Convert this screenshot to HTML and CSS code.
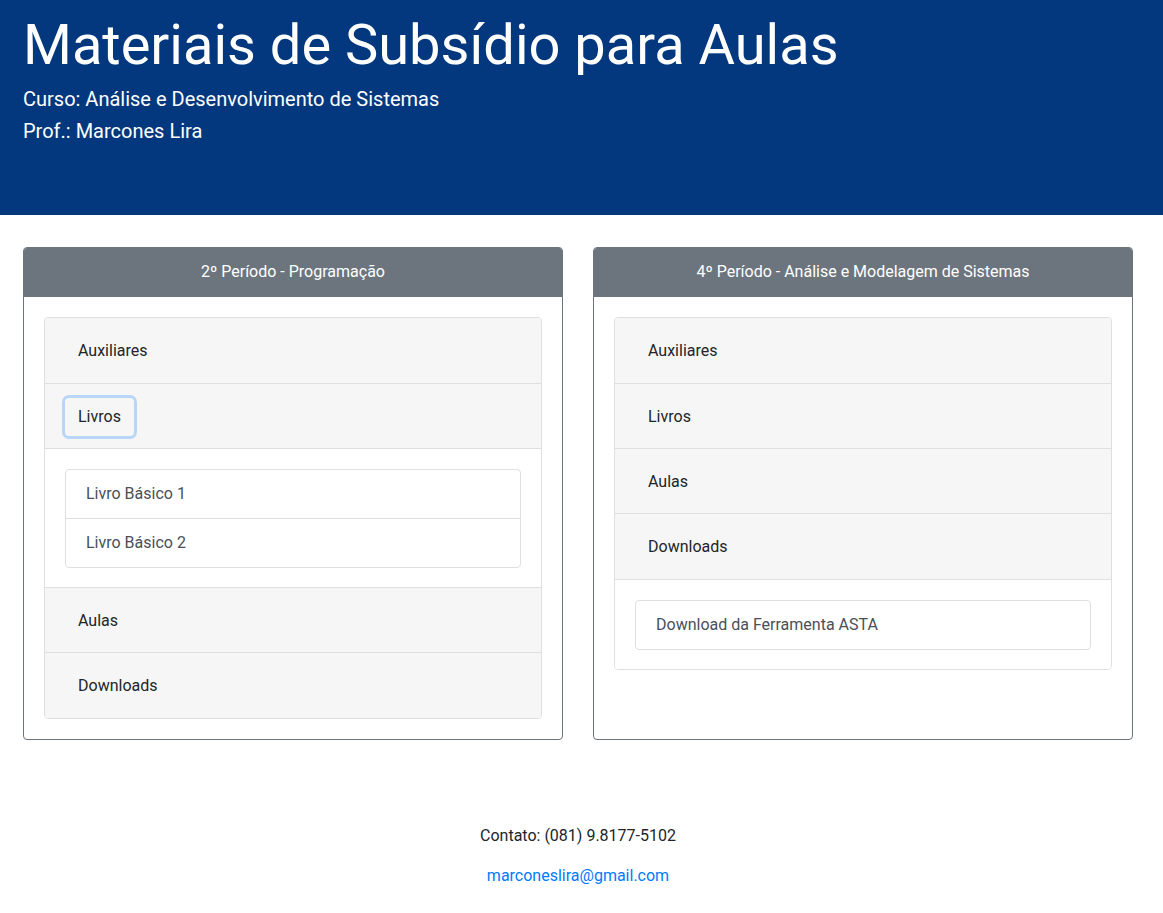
FILE: index.html
```html
<!DOCTYPE html>
<html lang="pt-br">
<head>
<meta charset="utf-8">
<title>Materiais de Subsídio para Aulas</title>
<link rel="stylesheet" href="styles.css">
</head>
<body>
<header class="hero">
  <h1 class="hero-title">Materiais de Subsídio para Aulas</h1>
  <p class="hero-line">Curso: Análise e Desenvolvimento de Sistemas</p>
  <p class="hero-line">Prof.: Marcones Lira</p>
</header>

<main class="content">
  <section class="card">
    <div class="card-head">2º Período - Programação</div>
    <div class="card-body">
      <div class="accordion">
        <div class="acc-item">
          <div class="acc-head"><button class="acc-btn">Auxiliares</button></div>
        </div>
        <div class="acc-item">
          <div class="acc-head"><button class="acc-btn focused">Livros</button></div>
          <div class="acc-body">
            <div class="list">
              <a class="list-item" href="#">Livro Básico 1</a>
              <a class="list-item" href="#">Livro Básico 2</a>
            </div>
          </div>
        </div>
        <div class="acc-item">
          <div class="acc-head"><button class="acc-btn">Aulas</button></div>
        </div>
        <div class="acc-item">
          <div class="acc-head"><button class="acc-btn">Downloads</button></div>
        </div>
      </div>
    </div>
  </section>

  <section class="card">
    <div class="card-head">4º Período - Análise e Modelagem de Sistemas</div>
    <div class="card-body">
      <div class="accordion">
        <div class="acc-item">
          <div class="acc-head"><button class="acc-btn">Auxiliares</button></div>
        </div>
        <div class="acc-item">
          <div class="acc-head"><button class="acc-btn">Livros</button></div>
        </div>
        <div class="acc-item">
          <div class="acc-head"><button class="acc-btn">Aulas</button></div>
        </div>
        <div class="acc-item">
          <div class="acc-head"><button class="acc-btn">Downloads</button></div>
          <div class="acc-body">
            <div class="list">
              <a class="list-item" href="#">Download da Ferramenta ASTA</a>
            </div>
          </div>
        </div>
      </div>
    </div>
  </section>
</main>

<footer class="footer">
  <p class="footer-line">Contato: (081) 9.8177-5102</p>
  <p class="footer-line"><a class="footer-link" href="#">marconeslira@gmail.com</a></p>
</footer>
</body>
</html>
```

FILE: styles.css
```css
* { box-sizing: border-box; }

body {
  margin: 0;
  font-family: Roboto, "Liberation Sans", sans-serif;
  font-size: 16px;
  line-height: 1.5;
  color: #212529;
  background: #fff;
}

.hero {
  background: #03387e;
  color: #fff;
  padding: 12px 23px 68px;
}

.hero-title {
  margin: 0 0 4px;
  font-size: 56px;
  font-weight: 400;
  line-height: 1.2;
}

.hero-line {
  margin: 0;
  font-size: 20px;
  line-height: 32px;
  font-weight: 400;
}

.content {
  display: grid;
  grid-template-columns: 540px 540px;
  column-gap: 30px;
  padding: 32px 23px 0;
}

.card {
  border: 1px solid #6c757d;
  border-radius: 4px;
  overflow: hidden;
  display: flex;
  flex-direction: column;
}

.card-head {
  background: #6c757d;
  color: #fff;
  text-align: center;
  padding: 12px 20px;
  height: 49px;
  line-height: 24px;
}

.card-body {
  padding: 20px;
}

.accordion {
  border: 1px solid #dfdfdf;
  border-radius: 4px;
  overflow: hidden;
}

.acc-item + .acc-item {
  border-top: 1px solid #dfdfdf;
}

.acc-head {
  background: #f6f6f6;
  height: 64.4px;
  padding: 14px 20px 0;
  display: flex;
  align-items: flex-start;
}

.acc-btn {
  font-family: inherit;
  font-size: 16px;
  line-height: 24px;
  height: 38px;
  color: #212529;
  background: transparent;
  border: 1px solid transparent;
  border-radius: 4px;
  padding: 6px 12px;
  cursor: pointer;
}

.acc-btn.focused {
  box-shadow: 0 0 0 3px rgba(0, 123, 255, 0.25);
}

.acc-body {
  border-top: 1px solid #dfdfdf;
  background: #fff;
  padding: 20px 20px 19px;
}

.list {
  border: 1px solid #dfdfdf;
  border-radius: 4px;
  display: flex;
  flex-direction: column;
}

.list-item {
  display: block;
  padding: 12px 20px;
  color: #495057;
  text-decoration: none;
  line-height: 24px;
}

.list-item + .list-item {
  border-top: 1px solid #dfdfdf;
}

.footer {
  text-align: center;
  padding: 84px 0 0;
  width: 1110px;
  margin-left: 23px;
}

.footer-line {
  margin: 0 0 16px;
}

.footer-link {
  color: #007bff;
  text-decoration: none;
}
```
